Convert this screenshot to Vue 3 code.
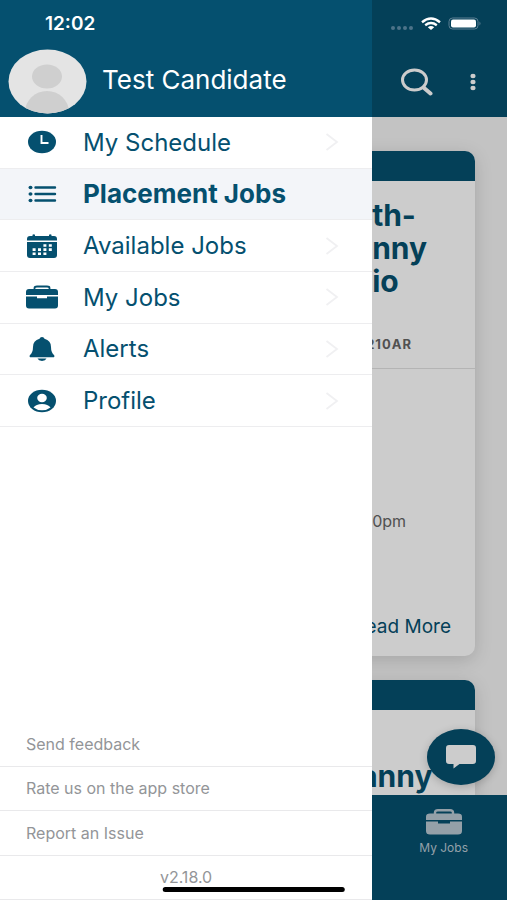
<script setup>
import { ref } from "vue";

const menuItems = [
  { id: "schedule", label: "My Schedule" },
  { id: "placement", label: "Placement Jobs" },
  { id: "available", label: "Available Jobs" },
  { id: "jobs", label: "My Jobs" },
  { id: "alerts", label: "Alerts" },
  { id: "profile", label: "Profile" },
];

const footerLinks = ["Send feedback", "Rate us on the app store", "Report an Issue"];

const active = ref("placement");

const select = (id) => {
  active.value = id;
};
</script>

<template>
  <div class="app">
    <div class="status-bar">
      <span class="time">12:02</span>
      <svg class="status-icons" width="92" height="16" viewBox="0 0 92 16" aria-hidden="true">
        <g fill="#4d7389">
          <circle cx="3" cy="12" r="2" />
          <circle cx="9" cy="12" r="2" />
          <circle cx="15" cy="12" r="2" />
          <circle cx="21" cy="12" r="2" />
        </g>
        <g fill="none" stroke="#fff" stroke-width="2.4">
          <path d="M32 6.200Q41-1 50 6.200" />
          <path d="M35.200 9.200Q41 5 46.800 9.200" />
        </g>
        <path d="M37.800 11.200Q41 8.800 44.200 11.200L41 14Z" fill="#fff" />
        <rect x="59" y="2" width="29" height="11" rx="3.500" fill="none" stroke="#5b7f93" />
        <rect x="61" y="3.500" width="25" height="8" rx="2" fill="#fff" />
        <path d="M89.500 5.500q2 2 0 4z" fill="#5b7f93" />
      </svg>
    </div>

    <header class="page-header">
      <button class="icon-btn" aria-label="Search">
        <svg width="34" height="28" viewBox="0 0 34 28">
          <ellipse cx="14.500" cy="12" rx="12" ry="10" fill="none" stroke="#fff" stroke-width="3" />
          <path d="M23.500 19.500L30.500 25.500" stroke="#fff" stroke-width="4" stroke-linecap="round" />
        </svg>
      </button>
      <button class="icon-btn" aria-label="More options">
        <svg width="6" height="18" viewBox="0 0 6 18" fill="#fff">
          <ellipse cx="3" cy="3" rx="2.600" ry="2.200" />
          <ellipse cx="3" cy="9" rx="2.600" ry="2.200" />
          <ellipse cx="3" cy="15" rx="2.600" ry="2.200" />
        </svg>
      </button>
    </header>

    <main class="page">
      <article class="card">
        <div class="card-strip"></div>
        <div class="card-head">
          <h2>th-<br />nny<br />io</h2>
          <p class="code">210AR</p>
        </div>
        <div class="card-body">
          <p class="hours">0pm</p>
          <a href="#" class="read-more">Read More</a>
        </div>
      </article>
      <article class="card">
        <div class="card-strip"></div>
        <div class="card-head second">
          <h2>anny</h2>
        </div>
      </article>
    </main>

    <nav class="tab-bar">
      <a href="#" class="tab">
        <svg width="36" height="26" viewBox="0 0 36 26">
          <path d="M9 5V3.500Q9 1.200 12 1.200H24Q27 1.200 27 3.500V5" fill="none" stroke="currentColor" stroke-width="2.400" />
          <path d="M0 11V7.500Q0 4.500 4 4.500H32Q36 4.500 36 7.500V11Z" fill="currentColor" />
          <path d="M0 12.500H12V14.500H24V12.500H36V22Q36 25.500 32 25.500H4Q0 25.500 0 22Z" fill="currentColor" />
        </svg>
        <span>My Jobs</span>
      </a>
    </nav>

    <button class="chat" aria-label="Open chat">
      <svg width="32" height="26" viewBox="0 0 32 26">
        <path d="M4 1H28Q31 1 31 4V17Q31 20 28 20H14.500L8.500 24.500V20H4Q1 20 1 17V4Q1 1 4 1Z" fill="#fff" />
      </svg>
    </button>

    <div class="backdrop"></div>

    <aside class="drawer">
      <div class="drawer-header">
        <svg class="avatar" width="79" height="65" viewBox="0 0 79 65" aria-hidden="true">
          <defs>
            <clipPath id="avatar-clip"><ellipse cx="39.500" cy="32.500" rx="39" ry="32" /></clipPath>
          </defs>
          <g clip-path="url(#avatar-clip)">
            <rect width="79" height="65" fill="#e4e4e4" />
            <ellipse cx="39" cy="27.500" rx="15" ry="12" fill="#cfcfcf" />
            <ellipse cx="39" cy="63" rx="22" ry="21" fill="#cfcfcf" />
          </g>
        </svg>
        <span class="user-name">Test Candidate</span>
      </div>

      <nav class="menu">
        <button
          v-for="item in menuItems"
          :key="item.id"
          class="menu-item"
          :class="{ active: active === item.id }"
          @click="select(item.id)"
        >
          <svg class="menu-icon" width="32" height="26" viewBox="0 0 32 26" fill="currentColor">
            <g v-if="item.id === 'schedule'">
              <ellipse cx="16" cy="13" rx="14" ry="11.200" />
              <path d="M15.500 6V14H22.500" fill="none" stroke="#fff" stroke-width="1.900" />
            </g>
            <g v-else-if="item.id === 'placement'">
              <ellipse cx="4.500" cy="6.500" rx="2" ry="1.700" />
              <ellipse cx="4.500" cy="13" rx="2" ry="1.700" />
              <ellipse cx="4.500" cy="19.500" rx="2" ry="1.700" />
              <path d="M9.500 6.500H29M9.500 13H29M9.500 19.500H29" stroke="currentColor" stroke-width="2.400" stroke-linecap="round" />
            </g>
            <g v-else-if="item.id === 'available'">
              <path d="M1 7.500V6Q1 3 4 3H6.500V1.800Q7.800 0.600 9 1.800V3H23V1.800Q24.200 0.600 25.500 1.800V3H28Q31 3 31 6V7.500Z" />
              <path d="M1 9H31V22Q31 25 28 25H4Q1 25 1 22Z" />
              <g stroke="#fff" stroke-width="2.600" stroke-dasharray="3 2.400">
                <path d="M17.400 12.500H26.200" />
                <path d="M6.600 16.600H26.200" />
                <path d="M6.600 20.700H20.800" />
              </g>
            </g>
            <g v-else-if="item.id === 'jobs'">
              <path d="M8.500 5V4Q8.500 2.500 11 2.500H21Q23.500 2.500 23.500 4V5" fill="none" stroke="currentColor" stroke-width="1.800" />
              <path d="M0 11V8Q0 5 3 5H29Q32 5 32 8V11Z" />
              <path d="M0 12.500H11V14.200H21V12.500H32V21.500Q32 24.500 29 24.500H3Q0 24.500 0 21.500Z" />
            </g>
            <g v-else-if="item.id === 'alerts'">
              <path d="M16 1Q18 1 18.500 2.800Q25 4.500 25 11Q25 16.500 28.200 19.200Q29 21.200 27 21.200H5Q3 21.200 3.800 19.200Q7 16.500 7 11Q7 4.500 13.500 2.800Q14 1 16 1Z" />
              <path d="M11.500 22.600H20.500Q19.500 25 16 25Q12.500 25 11.500 22.600Z" />
            </g>
            <g v-else>
              <ellipse cx="16" cy="13" rx="14" ry="11.200" />
              <ellipse cx="16" cy="10" rx="4.800" ry="4.200" fill="#fff" />
              <path d="M7.500 19.500Q10 16 16 16Q22 16 24.500 19.500Q21 22.300 16 22.300Q11 22.300 7.500 19.500Z" fill="#fff" />
            </g>
          </svg>
          <span class="label">{{ item.label }}</span>
          <svg v-if="active !== item.id" class="chevron" width="14" height="18" viewBox="0 0 14 18">
            <path d="M1.500 1L12 9L1.500 17" fill="none" stroke="#f0f0f2" stroke-width="1.800" />
          </svg>
        </button>
      </nav>

      <footer class="drawer-footer">
        <a v-for="link in footerLinks" :key="link" href="#">{{ link }}</a>
        <p class="version">v2.18.0</p>
      </footer>
    </aside>

    <div class="home-indicator"></div>
  </div>
</template>

<style>
body {
  margin: 0;
}
</style>

<style scoped>
.app {
  --drawer-width: 73.4vw;
  --page-gap: 32px;
  position: relative;
  display: flex;
  flex-direction: column;
  height: 100vh;
  overflow: hidden;
  background: #f4f4f4;
  color: #05506f;
  font-family: Inter, "Liberation Sans", sans-serif;
}

button {
  border: 0;
  padding: 0;
  background: none;
  color: inherit;
  font: inherit;
  cursor: pointer;
}

a {
  color: inherit;
  text-decoration: none;
}

h2,
p {
  margin: 0;
}

svg {
  display: block;
}

.status-bar {
  position: absolute;
  top: 0;
  left: 0;
  right: 0;
  z-index: 5;
  display: flex;
  justify-content: space-between;
  align-items: center;
  height: 47px;
  padding: 0 25px 0 45px;
  box-sizing: border-box;
  color: #fff;
}

.time {
  font-size: 19px;
  font-weight: 600;
}

.page-header {
  flex: none;
  display: flex;
  justify-content: flex-end;
  align-items: center;
  gap: 36px;
  height: 117px;
  padding: 46px 31px 0 0;
  box-sizing: border-box;
  background: #05506f;
}

.page {
  flex: 1;
  min-height: 0;
  overflow: hidden;
  padding: 34px var(--page-gap) 0;
}

.card {
  overflow: hidden;
  margin-bottom: 24px;
  border-radius: 10px;
  background: #fff;
  box-shadow: 0 4px 18px rgba(0, 0, 0, 0.15);
}

.card-strip {
  height: 30px;
  background: #05506f;
}

/* card copy sits at the edge of the open drawer */
.card-head,
.hours {
  padding-left: calc(var(--drawer-width) - var(--page-gap));
}

.card-head {
  padding-top: 18px;
  padding-bottom: 14px;
  border-bottom: 1px solid #e2e2e2;
}

.card-head.second {
  padding-top: 50px;
  padding-left: calc(var(--drawer-width) - var(--page-gap) - 12px);
}

h2 {
  font-size: 30px;
  line-height: 33px;
  font-weight: 700;
}

.code {
  margin-top: 36px;
  margin-left: -6px;
  color: #666;
  font-size: 13px;
  line-height: 20px;
  font-weight: 700;
  letter-spacing: 1px;
}

.card-body {
  display: flex;
  flex-direction: column;
  padding: 142px 0 16px;
}

.hours {
  color: #666;
  font-size: 16px;
  line-height: 20px;
}

.read-more {
  align-self: flex-end;
  margin-top: 83px;
  margin-right: 24px;
  font-size: 19px;
  line-height: 26px;
}

.tab-bar {
  flex: none;
  display: flex;
  justify-content: flex-end;
  height: 105px;
  background: #05506f;
}

.tab {
  flex: 0 0 25%;
  display: flex;
  flex-direction: column;
  align-items: center;
  gap: 5px;
  padding-top: 14px;
  color: #b9c9d3;
  font-size: 12px;
  line-height: 16px;
}

.chat {
  position: absolute;
  right: 12px;
  bottom: 115px;
  display: flex;
  align-items: center;
  justify-content: center;
  width: 68px;
  height: 56px;
  border-radius: 50%;
  background: #05506f;
  box-shadow: 0 2px 8px rgba(0, 0, 0, 0.2);
}

.backdrop {
  position: absolute;
  inset: 0;
  background: rgba(0, 0, 0, 0.2);
}

.drawer {
  position: absolute;
  top: 0;
  bottom: 0;
  left: 0;
  display: flex;
  flex-direction: column;
  width: var(--drawer-width);
  background: #fff;
}

.drawer-header {
  flex: none;
  display: flex;
  align-items: center;
  gap: 15px;
  height: 117px;
  padding: 45px 8px 0;
  box-sizing: border-box;
  background: #05506f;
  color: #fff;
}

.user-name {
  font-size: 26px;
  line-height: 32px;
  padding-bottom: 2px;
  white-space: nowrap;
}

.menu {
  flex: none;
  display: grid;
  grid-auto-rows: 1fr;
  height: 310px;
}

.menu-item {
  display: flex;
  align-items: center;
  gap: 25px;
  padding: 0 33px 0 26px;
  border-bottom: 1px solid #ededef;
  font-size: 24px;
  text-align: left;
}

.menu-item.active {
  background: #f3f5f9;
  font-size: 26px;
  font-weight: 700;
}

.label {
  flex: 1;
  white-space: nowrap;
}

.drawer-footer {
  display: grid;
  grid-auto-rows: 1fr;
  height: 178px;
  margin-top: auto;
  color: #939598;
  font-size: 16px;
}

.drawer-footer a,
.version {
  display: flex;
  align-items: center;
  padding-left: 26px;
  border-bottom: 1px solid #e9e9eb;
}

.drawer-footer .version {
  justify-content: center;
  padding-left: 0;
}

.home-indicator {
  position: absolute;
  bottom: 8px;
  left: 50%;
  width: 36%;
  height: 5px;
  border-radius: 3px;
  background: #000;
  transform: translateX(-50%);
}
</style>
